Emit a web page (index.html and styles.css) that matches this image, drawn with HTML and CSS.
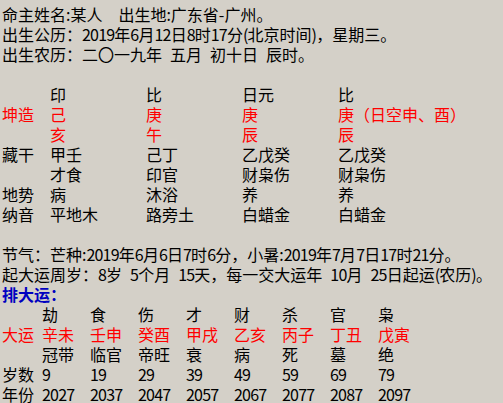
FILE: index.html
```html
<!DOCTYPE html>
<html lang="zh-CN">
<head>
<meta charset="utf-8">
<title>命盘</title>
<link rel="stylesheet" href="styles.css">
</head>
<body>
<div class="page">
  <p class="line">命主姓名:某人  出生地:广东省-广州。</p>
  <p class="line">出生公历：<span class="n">2019</span>年<span class="n">6</span>月<span class="n">12</span>日<span class="n">8</span>时<span class="n">17</span>分<span class="n">(</span>北京时间<span class="n">)</span>，星期三。</p>
  <p class="line">出生农历：二〇一九年 五月 初十日 辰时。</p>
  <div class="blank"></div>

  <div class="pillars">
    <span></span><span>印</span><span>比</span><span>日元</span><span>比</span>
    <span class="red">坤造</span><span class="red">己</span><span class="red">庚</span><span class="red">庚</span><span class="red">庚（日空申、酉）</span>
    <span></span><span class="red">亥</span><span class="red">午</span><span class="red">辰</span><span class="red">辰</span>
    <span>藏干</span><span>甲壬</span><span>己丁</span><span>乙戊癸</span><span>乙戊癸</span>
    <span></span><span>才食</span><span>印官</span><span>财枭伤</span><span>财枭伤</span>
    <span>地势</span><span>病</span><span>沐浴</span><span>养</span><span>养</span>
    <span>纳音</span><span>平地木</span><span>路旁土</span><span>白蜡金</span><span>白蜡金</span>
  </div>
  <div class="blank"></div>

  <p class="line">节气：芒种:<span class="n">2019</span>年<span class="n">6</span>月<span class="n">6</span>日<span class="n">7</span>时<span class="n">6</span>分，小暑:<span class="n">2019</span>年<span class="n">7</span>月<span class="n">7</span>日<span class="n">17</span>时<span class="n">21</span>分。</p>
  <p class="line">起大运周岁：<span class="n">8</span>岁 <span class="n">5</span>个月 <span class="n">15</span>天，每一交大运年 <span class="n">10</span>月 <span class="n">25</span>日起运<span class="n">(</span>农历<span class="n">)</span>。</p>
  <p class="line title">排大运：</p>

  <div class="dayun">
    <span></span><span>劫</span><span>食</span><span>伤</span><span>才</span><span>财</span><span>杀</span><span>官</span><span>枭</span>
    <span class="red">大运</span><span class="red">辛未</span><span class="red">壬申</span><span class="red">癸酉</span><span class="red">甲戌</span><span class="red">乙亥</span><span class="red">丙子</span><span class="red">丁丑</span><span class="red">戊寅</span>
    <span></span><span>冠带</span><span>临官</span><span>帝旺</span><span>衰</span><span>病</span><span>死</span><span>墓</span><span>绝</span>
    <span>岁数</span><span class="n">9</span><span class="n">19</span><span class="n">29</span><span class="n">39</span><span class="n">49</span><span class="n">59</span><span class="n">69</span><span class="n">79</span>
    <span>年份</span><span class="n">2027</span><span class="n">2037</span><span class="n">2047</span><span class="n">2057</span><span class="n">2067</span><span class="n">2077</span><span class="n">2087</span><span class="n">2097</span>
  </div>
</div>
</body>
</html>
```

FILE: styles.css
```css
html, body {
  margin: 0;
  padding: 0;
  height: 100%;
  overflow: hidden;
  background: #d4d0c8;
}

.page {
  padding: 4px 0 0 2px;
  font-family: "Noto Sans CJK SC", "Noto Sans", sans-serif;
  font-size: 16px;
  line-height: 20px;
  color: #000;
  word-spacing: 4.4px;
}

.line {
  margin: 0;
  height: 20px;
  white-space: pre;
}

.n {
  letter-spacing: -0.8px;
}

.blank {
  height: 20px;
}

.red {
  color: #f00;
}

.title {
  color: #0000c0;
  font-weight: bold;
}

.pillars {
  display: grid;
  grid-template-columns: 48px 96px 96px 96px auto;
  grid-auto-rows: 20px;
  white-space: nowrap;
}

.dayun {
  display: grid;
  grid-template-columns: 40px repeat(8, 48px);
  grid-auto-rows: 20px;
  white-space: nowrap;
}
```
